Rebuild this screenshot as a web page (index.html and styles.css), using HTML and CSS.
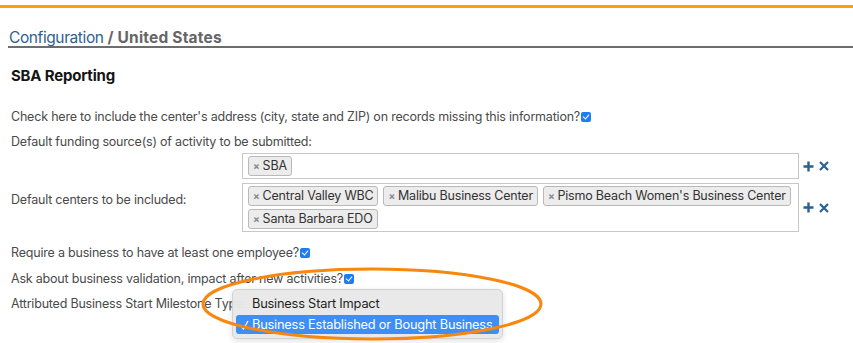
FILE: index.html
```html
<html lang="en">
<head>
<meta charset="UTF-8">
<meta name="viewport" content="width=device-width, initial-scale=1.0">
<title>Configuration - United States</title>
<link rel="stylesheet" href="styles.css">
</head>
<body>
<div class="topbar"></div>
<h1 class="crumbs"><a href="#">Configuration</a> / United States</h1>
<div class="content">
  <h2>SBA Reporting</h2>
  <p class="line">Check here to include the center's address (city, state and ZIP) on records missing this information?<span class="check"></span></p>
  <p class="line tight">Default funding source(s) of activity to be submitted:</p>
  <div class="field-row">
    <div class="field-label"></div>
    <div class="tagbox">
      <span class="tag"><b>×</b>SBA</span>
    </div>
    <div class="actions">
      <svg width="11" height="11" viewBox="0 0 11 11"><path d="M5.5 0.5v10M0.5 5.5h10" stroke="#2d5f8f" stroke-width="2.4"/></svg>
      <svg width="10" height="10" viewBox="0 0 10 10"><path d="M1 1l8 8M9 1l-8 8" stroke="#2d5f8f" stroke-width="2.2"/></svg>
    </div>
  </div>
  <div class="field-row">
    <div class="field-label">Default centers to be included:</div>
    <div class="tagbox">
      <span class="tag"><b>×</b>Central Valley WBC</span>
      <span class="tag"><b>×</b>Malibu Business Center</span>
      <span class="tag"><b>×</b>Pismo Beach Women's Business Center</span>
      <span class="tag"><b>×</b>Santa Barbara EDO</span>
    </div>
    <div class="actions">
      <svg width="11" height="11" viewBox="0 0 11 11"><path d="M5.5 0.5v10M0.5 5.5h10" stroke="#2d5f8f" stroke-width="2.4"/></svg>
      <svg width="10" height="10" viewBox="0 0 10 10"><path d="M1 1l8 8M9 1l-8 8" stroke="#2d5f8f" stroke-width="2.2"/></svg>
    </div>
  </div>
  <p class="line first">Require a business to have at least one employee?<span class="check"></span></p>
  <p class="line">Ask about business validation, impact after new activities?<span class="check"></span></p>
  <div class="milestone">
    <p class="line">Attributed Business Start Milestone Type:</p>
    <div class="menu">
      <div class="option">Business Start Impact</div>
      <div class="option selected"><svg class="tick" width="9" height="10" viewBox="0 0 9 10"><path d="M1 6l2.5 3L8 1" fill="none" stroke="#fff" stroke-width="1.3"/></svg>Business Established or Bought Business</div>
    </div>
    <svg class="circle" width="346" height="76" viewBox="0 0 346 76">
      <ellipse cx="173" cy="38" rx="169" ry="35" fill="none" stroke="#f7870e" stroke-width="3"/>
    </svg>
  </div>
</div>
</body>
</html>
```

FILE: styles.css
```css
body {
  font-family: Inter, "Noto Sans", sans-serif;
  font-size: 12.5px;
  letter-spacing: -0.2px;
  color: #4a4a4a;
  margin: 0;
  padding: 0;
  background-color: #fff;
  overflow: hidden;
}

.topbar {
  margin-top: 5px;
  height: 3px;
  background-color: #f8a300;
}

.crumbs {
  margin: 21px 0 0 8px;
  padding: 0 0 0 1px;
  font-size: 15.5px;
  font-weight: 700;
  letter-spacing: 0.2px;
  color: #666;
  border-bottom: 2px solid #6d6d6d;
  line-height: 17px;
}

.crumbs a {
  color: #2d6192;
  font-weight: normal;
  letter-spacing: -0.4px;
  text-decoration: none;
}

.content {
  padding: 0 11px;
}

.content h2 {
  margin: 18px 0 23px;
  font-size: 15px;
  font-weight: 700;
  color: #151515;
  line-height: 20px;
}

.line {
  margin: 0 0 9px;
  line-height: 16px;
}

.line.tight {
  margin-bottom: 3px;
}

.line.first {
  margin-top: 13px;
  margin-bottom: 10px;
}

.check {
  display: inline-block;
  width: 10px;
  height: 10px;
  margin-left: 1px;
  vertical-align: -1px;
  border-radius: 2px;
  background-color: #1e7cf1;
  position: relative;
}

.check::after {
  content: "";
  position: absolute;
  left: 3px;
  top: 1px;
  width: 3px;
  height: 5px;
  border: solid #fff;
  border-width: 0 1.5px 1.5px 0;
  transform: rotate(40deg);
}

.field-row {
  display: flex;
  align-items: center;
  margin-bottom: 4px;
}

.field-label {
  width: 231px;
  flex-shrink: 0;
  align-self: flex-start;
  padding-top: 9px;
  line-height: 16px;
}

.tagbox {
  width: 548px;
  border: 1px solid #c8c8c8;
  padding: 2px 2px 2px 5px;
  display: flex;
  flex-wrap: wrap;
  gap: 3px 5px;
}

.tag {
  display: inline-block;
  white-space: nowrap;
  border: 1px solid #b9b9b9;
  border-radius: 3px;
  background-color: #ececec;
  padding: 0 4px;
  line-height: 18px;
  color: #333;
}

.tag b {
  color: #888;
  font-size: 10px;
  margin-right: 3px;
}

.actions {
  margin-left: 4px;
  display: flex;
  align-items: center;
  gap: 5px;
}

.milestone {
  position: relative;
}

.menu {
  position: absolute;
  left: 221px;
  top: -7px;
  width: 263px;
  padding: 4px 3px;
  background-color: rgba(232, 232, 232, 0.97);
  border: 1px solid #d2d2d2;
  border-radius: 5px;
  box-shadow: 0 2px 6px rgba(0, 0, 0, 0.12);
  font-size: 12.8px;
  color: #1e1e1e;
  white-space: nowrap;
}

.option {
  padding: 0 4px 0 16px;
  line-height: 20px;
  height: 20px;
}

.option.selected {
  margin-top: 1px;
  height: 19px;
  line-height: 19px;
  background-color: #3d8ef5;
  color: #fff;
  border-radius: 3px;
  padding-left: 4px;
}

.tick {
  margin-right: 3px;
  vertical-align: -1px;
}

.circle {
  position: absolute;
  left: 188px;
  top: -30px;
}
```
